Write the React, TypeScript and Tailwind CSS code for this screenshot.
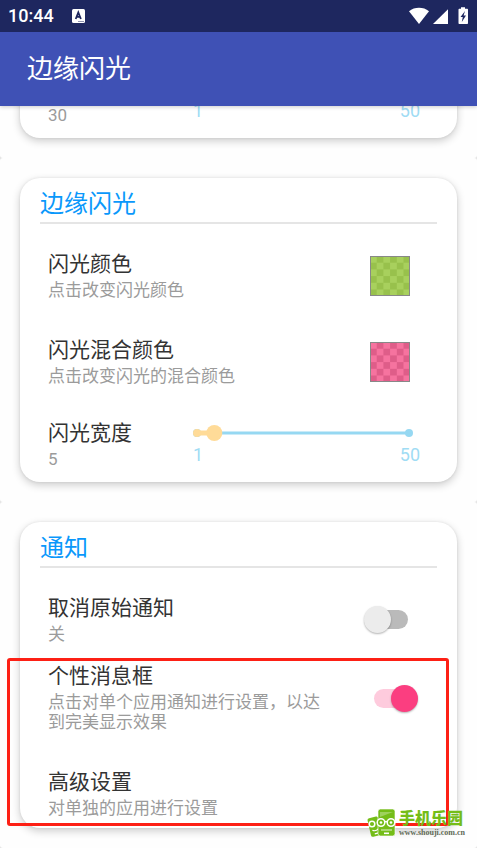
import React, { useId, useState } from 'react';

const Section: React.FC<{ title?: string; className?: string; children: React.ReactNode }> = ({
  title,
  className = '',
  children,
}) => (
  <section className={`rounded-[3px] bg-[#fefefe] p-5 ${className}`}>
    <div className="rounded-[20px] bg-white shadow-[0_3px_8px_rgba(0,0,0,0.2),0_0_3px_rgba(0,0,0,0.08)]">
      {title && (
        <h2 className="mx-5 mb-[9px] border-b-2 border-[#e5e5e5] pt-2 text-[24px] leading-9 text-[#0a98fb]">
          {title}
        </h2>
      )}
      {children}
    </div>
  </section>
);

interface RowTextProps {
  title: string;
  summary: string;
}

const RowText: React.FC<RowTextProps> = ({ title, summary }) => (
  <div className="min-w-0 flex-1">
    <div className="text-[21px] leading-7 text-[#333]">{title}</div>
    <div className="py-0.5 text-[17px] leading-5 text-[#9b9b9b]">{summary}</div>
  </div>
);

interface ColorRowProps {
  title: string;
  summary: string;
  light: string;
  dark: string;
}

const ColorRow: React.FC<ColorRowProps> = ({ title, summary, light, dark }) => {
  const patternId = useId();
  return (
    <button type="button" className="flex min-h-[86px] w-full items-center pr-[47px] pl-7 text-left">
      <RowText title={title} summary={summary} />
      <svg width="40" height="40" viewBox="0 0 40 40" shapeRendering="crispEdges" aria-hidden="true">
        <defs>
          <pattern id={patternId} x="0" y="0" width="13.4" height="13.4" patternUnits="userSpaceOnUse">
            <rect width="13.4" height="13.4" fill={light} />
            <rect y="6.7" width="6.7" height="6.7" fill={dark} />
            <rect x="6.7" width="6.7" height="6.7" fill={dark} />
          </pattern>
        </defs>
        <rect width="40" height="40" fill="#888" />
        <rect x="1" y="1" width="38" height="38" fill={`url(#${patternId})`} />
      </svg>
    </button>
  );
};

const SliderRow: React.FC<{ title?: string; initial: number }> = ({ title, initial }) => {
  const [value, setValue] = useState(initial);
  const id = useId();
  const percent = ((value - 1) / 49) * 100;

  return (
    <div className="flex pt-[14px] pr-[37px] pb-2.5 pl-7">
      <div className="w-[145px] shrink-0">
        <label htmlFor={id} className="block h-7 text-[21px] leading-7 text-[#333]">
          {title}
        </label>
        <div className="text-[17px] leading-[25px] text-[#9b9b9b]">{value}</div>
      </div>
      <div className="flex-1">
        <div className="relative mr-[7px] h-7">
          <svg className="h-7 w-full overflow-visible" aria-hidden="true">
            <circle cx="4" cy="14" r="4" fill="#96d8f2" />
            <svg x="4" className="overflow-visible" style={{ width: 'calc(100% - 8px)' }}>
              <line x1="0" x2="100%" y1="14" y2="14" stroke="#96d8f2" strokeWidth="3" />
              <circle cx="100%" cy="14" r="4" fill="#96d8f2" />
              <line x1="0" x2={`${percent}%`} y1="14" y2="14" stroke="#ffdb98" strokeWidth="5" />
              <circle cx="0" cy="14" r="4" fill="#ffdb98" />
              <circle cx={`${percent}%`} cy="14" r="8" fill="#ffdb98" />
            </svg>
          </svg>
          <input
            id={id}
            type="range"
            min={1}
            max={50}
            value={value}
            onChange={(e) => setValue(Number(e.target.value))}
            className="absolute inset-0 m-0 h-7 w-full cursor-pointer opacity-0"
          />
        </div>
        <div className="flex justify-between text-[18px] leading-4 text-[#9fdcf4]">
          <span>1</span>
          <span>50</span>
        </div>
      </div>
    </div>
  );
};

interface SwitchRowProps {
  title: string;
  summary: string;
  defaultChecked?: boolean;
  className?: string;
}

const SwitchRow: React.FC<SwitchRowProps> = ({ title, summary, defaultChecked, className = '' }) => (
  <label className={`flex cursor-pointer items-center pr-[49px] pl-7 ${className}`}>
    <RowText title={title} summary={summary} />
    <span className="flex w-20 justify-end">
      <input type="checkbox" role="switch" defaultChecked={defaultChecked} className="peer sr-only" />
      <span className="relative h-[19px] w-[34px] rounded-full bg-[#bababa] peer-checked:bg-[#fecbdd] peer-checked:[&>span]:left-[17px] peer-checked:[&>span]:bg-[#fb3e80]">
        <span className="absolute -top-1 -left-2.5 size-[27px] rounded-full bg-[#ececec] shadow-[0_1px_2px_rgba(0,0,0,0.3)]" />
      </span>
    </span>
  </label>
);

const StatusBar: React.FC = () => (
  <div className="flex h-8 items-center bg-[#1e275f] px-2 text-white">
    <span className="text-[18px] leading-8 font-medium">10:44</span>
    <svg className="ml-[18px]" width="14" height="14" viewBox="0 0 14 14" aria-hidden="true">
      <rect width="13" height="14" rx="1.5" fill="#fff" />
      <path d="M3.7 10 6.3 3.5 8.9 10M4.7 7.8h3.2" fill="none" stroke="#1e275f" strokeWidth="1.8" />
      <path d="M6.5 12.5h1m1 0h1m1 0h1" stroke="#1e275f" />
    </svg>
    <svg className="ml-auto" width="60" height="20" viewBox="0 0 60 20" aria-hidden="true">
      <path d="M0 5.2C5.6.7 14.4.7 20 5.2L10 18Z" fill="#fff" />
      <path d="M39 3.2V18H24Z" fill="#fff" />
      <path d="M52 1.2h4v1.6h2c.6 0 1 .4 1 1V17c0 .6-.4 1-1 1h-7.500c-.6 0-1-.4-1-1V3.800c0-.6.4-1 1-1H52Z" fill="#fff" />
      <path d="M56 5 51.500 11h2.300L52.800 16 57 9.500h-2.400Z" fill="#1e275f" />
    </svg>
  </div>
);

const Watermark: React.FC = () => (
  <div className="absolute right-3 bottom-2.5 flex items-end text-[#74bd18]">
    <svg className="-mr-3.5" width="46" height="30" viewBox="0 0 46 30" aria-hidden="true">
      <g transform="rotate(-13 8 18)">
        <rect x="2" y="9" width="11" height="19" rx="2" fill="currentColor" />
        <path d="M4.500 21.500c2 1.500 4 1.500 6 0" fill="none" stroke="#fff" />
        <rect x="6" y="25" width="4" height="1.200" fill="#fff" />
      </g>
      <rect x="11" y="1" width="17" height="27" rx="2.500" fill="currentColor" stroke="#fff" strokeWidth="0.600" />
      <path d="M13 4h13L13 9Z" fill="#fff" opacity="0.300" />
      <path d="M14 22h11" stroke="#fff" strokeWidth="0.800" />
      <rect x="17" y="24.500" width="5" height="1.600" fill="#fff" />
      <g fill="currentColor" stroke="#fff" strokeWidth="1.500">
        <circle cx="5" cy="16" r="2.800" />
        <circle cx="14" cy="14.500" r="3.800" />
        <circle cx="24" cy="14.500" r="3.800" />
      </g>
      <path d="M17.800 14q1.200-1 2.400 0" fill="none" stroke="#fff" strokeWidth="1.300" />
      <circle cx="14" cy="14.500" r="1.300" fill="#fff" />
      <circle cx="24" cy="14.500" r="1.300" fill="#fff" />
    </svg>
    <div>
      <div className="text-[16px] leading-[18px] font-black">手机乐园</div>
      <div className="font-['Liberation_Serif',serif] text-[8px] leading-[10px] font-bold text-[#5f6a55]">
        www.shouji.com.cn
      </div>
    </div>
  </div>
);

const App: React.FC = () => {
  return (
    <div className="relative min-h-screen overflow-hidden bg-[#e4e4e4] font-[Roboto,'Noto_Sans_CJK_SC',sans-serif]">
      <header className="relative z-10 shadow-[0_1px_4px_rgba(0,0,0,0.2)]">
        <StatusBar />
        <div className="bg-[#3f51b5] px-[27px] py-4 text-white">
          <h1 className="text-[26px] leading-[42px]">边缘闪光</h1>
        </div>
      </header>

      <main>
        {/* scrolled partly under the app bar */}
        <Section className="-mt-[65px]">
          <SliderRow initial={30} />
        </Section>

        <Section title="边缘闪光">
          <ColorRow title="闪光颜色" summary="点击改变闪光颜色" light="#a8d05d" dark="#98c14c" />
          <ColorRow title="闪光混合颜色" summary="点击改变闪光的混合颜色" light="#f6739f" dark="#df5d89" />
          <SliderRow title="闪光宽度" initial={5} />
        </Section>

        <Section title="通知">
          <SwitchRow title="取消原始通知" summary="关" className="min-h-[85px]" />
          <div className="relative">
            <SwitchRow
              title="个性消息框"
              summary="点击对单个应用通知进行设置，以达到完美显示效果"
              defaultChecked
            />
            <button type="button" className="flex w-full pt-[34px] pr-[47px] pb-2 pl-7 text-left">
              <RowText title="高级设置" summary="对单独的应用进行设置" />
            </button>
            <div className="pointer-events-none absolute -top-1 right-2 bottom-0.5 -left-[13px] rounded-[3px] border-3 border-[#fd2015]" />
          </div>
        </Section>
      </main>

      <Watermark />
    </div>
  );
};

export default App;
